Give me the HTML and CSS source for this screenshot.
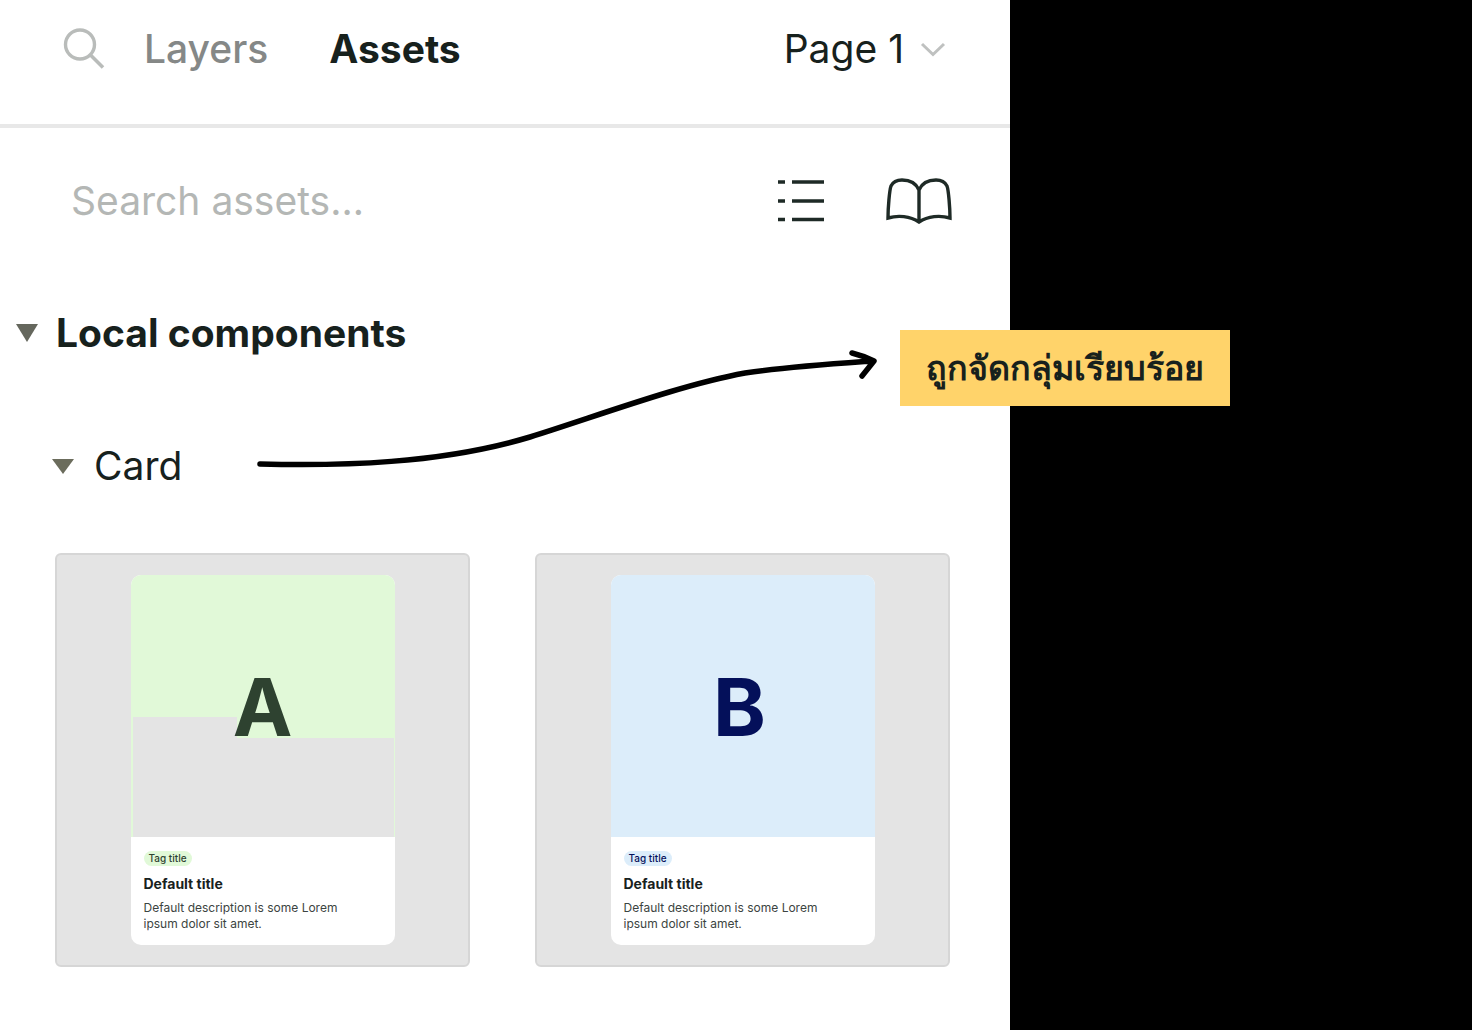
FILE: index.html
```html
<!DOCTYPE html>
<html lang="en">
<head>
<meta charset="utf-8">
<title>Assets panel</title>
<link rel="stylesheet" href="styles.css">
</head>
<body>
<main class="panel">
  <header class="topbar">
    <svg class="icon-search" width="44" height="44" viewBox="0 0 44 44" fill="none"><circle cx="18" cy="17.5" r="14.5" stroke="#b9bcba" stroke-width="3.4"/><path d="M28.5 28 L41 40.5" stroke="#b9bcba" stroke-width="3.6"/></svg>
    <span class="tab tab-muted">Layers</span>
    <span class="tab tab-active">Assets</span>
    <span class="page">Page 1</span>
    <svg class="icon-chevron" width="26" height="16" viewBox="0 0 26 16" fill="none"><path d="M2 3 L13 13.5 L24 3" stroke="#bfc1c0" stroke-width="3"/></svg>
  </header>
  <section class="search-row">
    <span class="search-text">Search assets...</span>
    <svg class="icon-list" width="46" height="44" viewBox="0 0 46 44" fill="none" stroke="#1e2a26" stroke-width="3.4"><path d="M0 3H7M14 3H46M0 22H7M14 22H46M0 40.5H7M14 40.5H46"/></svg>
    <svg class="icon-book" width="66" height="46" viewBox="0 0 66 46" fill="none" stroke="#1e2a26" stroke-width="3.4"><path d="M33 12 C30 5 24 2 16 2 C10 2 7 4 5 8 C3.500 12 2 30 2 40 C12 37 24 38 33 44 C42 38 54 37 64 40 C64 30 62.500 12 61 8 C59 4 56 2 50 2 C42 2 36 5 33 12 Z M33 12 V44"/></svg>
  </section>
  <section class="group-head">
    <svg class="caret" width="22" height="18" viewBox="0 0 22 18"><path d="M0 0H22L11 18Z" fill="#65675d"/></svg>
    <h2 class="group-title">Local components</h2>
  </section>
  <section class="sub-head">
    <svg class="caret" width="22" height="15" viewBox="0 0 22 15"><path d="M0 0H22L11 15Z" fill="#6b6c5c"/></svg>
    <h3 class="sub-title">Card</h3>
  </section>
  <section class="grid">
    <article class="tile">
      <div class="card">
        <div class="art art-a">
          <div class="patch"></div>
          <div class="patch-left"></div>
          <span class="letter letter-a">A</span>
        </div>
        <div class="body">
          <span class="tag tag-a">Tag title</span>
          <strong class="title">Default title</strong>
          <p class="desc">Default description is some Lorem ipsum dolor sit amet.</p>
        </div>
      </div>
    </article>
    <article class="tile">
      <div class="card">
        <div class="art art-b">
          <span class="letter letter-b">B</span>
        </div>
        <div class="body">
          <span class="tag tag-b">Tag title</span>
          <strong class="title">Default title</strong>
          <p class="desc">Default description is some Lorem ipsum dolor sit amet.</p>
        </div>
      </div>
    </article>
  </section>
</main>
<svg class="arrow" width="1472" height="1030" viewBox="0 0 1472 1030" fill="none"><path d="M260 464 C340 466 440 464 530 437 C600 415 680 385 745 373 C785 367 830 364 872 361 M852 353 C860 355 868 358 874 361 C870 366 866 371 862 376" stroke="#000" stroke-width="5.500" stroke-linecap="round" stroke-linejoin="round"/></svg>
<div class="note">ถูกจัดกลุ่มเรียบร้อย</div>
</body>
</html>
```
FILE: styles.css
```css
* { box-sizing: border-box; }
html, body { margin: 0; height: 100%; }
body {
  background: #000;
  font-family: Inter, "Noto Sans", "Liberation Sans", sans-serif;
  color: #17211d;
  overflow: hidden;
}
.panel {
  width: 1010px;
  height: 1030px;
  background: #fff;
  display: flex;
  flex-direction: column;
}
.topbar {
  height: 128px;
  flex: none;
  border-bottom: 4px solid #e8e8e8;
  padding: 0 64px 26px 62px;
  display: flex;
  align-items: center;
}
.icon-search { margin-right: 38px; }
.tab { font-size: 39px; line-height: 48px; }
.tab-muted { color: #858887; font-weight: 500; margin-right: 61px; }
.tab-active { color: #17211d; font-weight: 700; }
.page { margin-left: auto; font-size: 39px; line-height: 48px; font-weight: 400; }
.icon-chevron { margin-left: 16px; }
.search-row {
  height: 146px;
  flex: none;
  padding: 0 58px 0 71px;
  display: flex;
  align-items: center;
}
.search-text { font-size: 39px; line-height: 48px; color: #b4b7b5; margin-right: auto; }
.icon-list { margin-right: 62px; }
.group-head {
  display: flex;
  align-items: center;
  height: 60px;
  flex: none;
  padding-left: 16px;
  gap: 18px;
  margin-top: 29px;
}
.group-title { margin: 0; font-size: 39px; line-height: 48px; font-weight: 700; }
.sub-head {
  display: flex;
  align-items: center;
  height: 60px;
  flex: none;
  padding-left: 52px;
  gap: 20px;
  margin-top: 73px;
}
.sub-title { margin: 0; font-size: 39px; line-height: 48px; font-weight: 400; }
.grid {
  margin-top: 57px;
  padding-left: 55px;
  display: flex;
  gap: 65px;
}
.tile {
  width: 415px;
  height: 414px;
  background: #e4e4e4;
  border: 2px solid #d6d6d6;
  border-radius: 6px;
  display: flex;
  justify-content: center;
  padding-top: 20px;
}
.card {
  width: 264px;
  height: 370px;
  background: #fff;
  border-radius: 10px;
  overflow: hidden;
  display: flex;
  flex-direction: column;
}
.art {
  height: 262px;
  flex: none;
  position: relative;
  display: flex;
  justify-content: center;
  padding-top: 89px;
}
.art-a { background: #e1f9d8; }
.art-b { background: #dcedfa; }
.patch {
  position: absolute;
  left: 2px;
  right: 1px;
  top: 163px;
  bottom: 0;
  background: #e4e4e4;
}
.patch-left {
  position: absolute;
  left: 2px;
  width: 104px;
  top: 142px;
  height: 21px;
  background: #e4e4e4;
}
.letter {
  position: relative;
  font-size: 80px;
  line-height: 86px;
  font-weight: 700;
}
.letter-a { color: #2e4230; }
.letter-b { color: #04105a; left: -3px; }
.body {
  padding: 14px 13px 0;
  display: flex;
  flex-direction: column;
  align-items: flex-start;
}
.tag {
  font-size: 10px;
  line-height: 15px;
  font-weight: 500;
  padding: 0 5px;
  border-radius: 8px;
}
.tag-a { background: #e1f9d8; color: #2e4230; }
.tag-b { background: #dcedfa; color: #04105a; }
.title { font-size: 14px; line-height: 18px; font-weight: 700; margin-top: 9px; color: #17211d; }
.desc { margin: 7px 0 0; font-size: 12px; line-height: 16px; color: #3c4441; width: 225px; }
.arrow { position: absolute; left: 0; top: 0; pointer-events: none; }
.note {
  position: absolute;
  left: 900px;
  top: 330px;
  width: 330px;
  height: 76px;
  background: #ffd36a;
  color: #17211d;
  font-family: "Noto Sans", Inter, "DejaVu Sans", sans-serif;
  font-size: 34px;
  font-weight: 700;
  line-height: 74px;
  text-align: center;
  white-space: nowrap;
}
```
